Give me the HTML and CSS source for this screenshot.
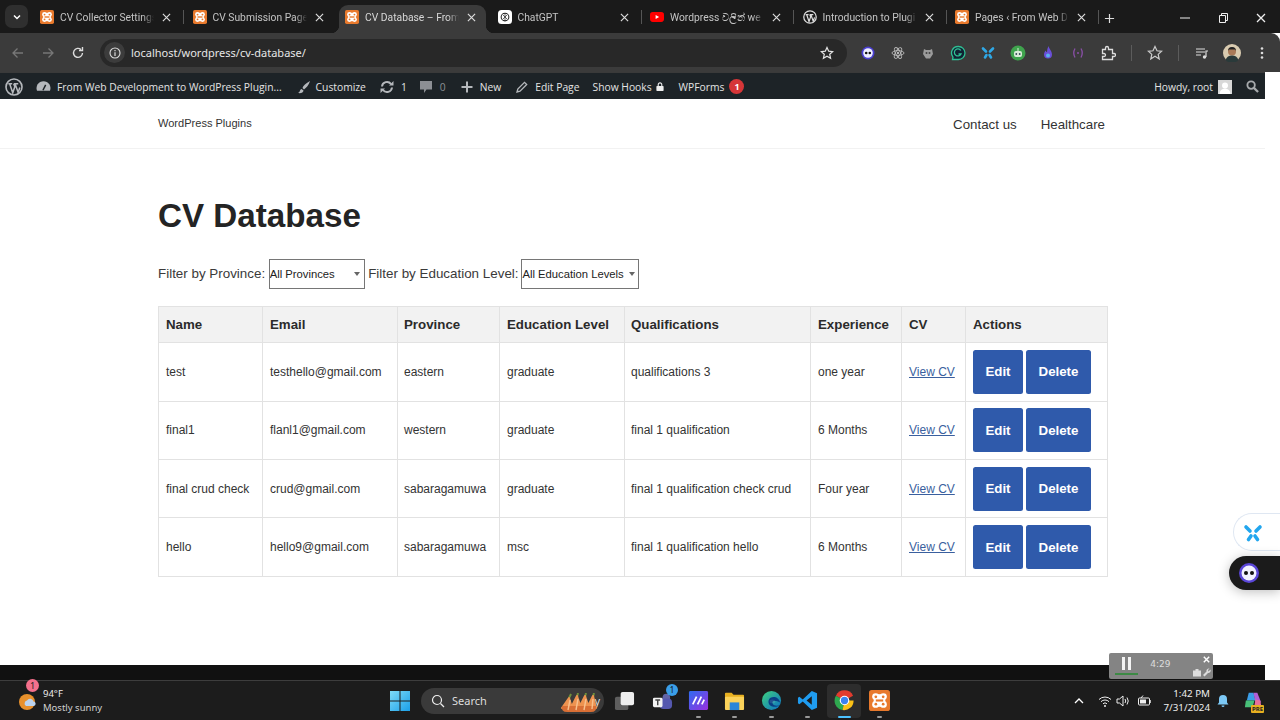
FILE: index.html
```html
<!DOCTYPE html>
<html lang="en">
<head>
<meta charset="utf-8">
<title>CV Database</title>
<link rel="stylesheet" href="styles.css">
</head>
<body>
<svg class="defs" aria-hidden="true">
  <symbol id="xampp" viewBox="0 0 20 20"><rect width="20" height="20" rx="2.500" fill="#e8792c"/><g fill="#fff"><circle cx="6.300" cy="6.300" r="3.300"/><circle cx="13.700" cy="6.300" r="3.300"/><circle cx="6.300" cy="13.700" r="3.300"/><circle cx="13.700" cy="13.700" r="3.300"/><rect x="6" y="4" width="8" height="12"/><rect x="4.500" y="7" width="11" height="6"/></g><g fill="#e8792c"><circle cx="6.500" cy="6.500" r="1.300"/><circle cx="13.500" cy="6.500" r="1.300"/><circle cx="6.500" cy="13.500" r="1.300"/><circle cx="13.500" cy="13.500" r="1.300"/><rect x="6.500" y="9" width="7" height="2"/></g></symbol>
  <symbol id="wp" viewBox="0 0 20 20"><circle cx="10" cy="10" r="8.900" fill="none" stroke="currentColor" stroke-width="1.800"/><path d="M3.700 6.500h4.300M9.700 6.500h5M5.200 6.500l3.400 10 2.300-6.700-1.200-3.300M11.200 6.500l3.400 9.500 1.900-5.500" fill="none" stroke="currentColor" stroke-width="1.700"/></symbol>
  <symbol id="x" viewBox="0 0 10 10"><path d="M1 1l8 8M9 1l-8 8" stroke="currentColor" stroke-width="1.300" fill="none"/></symbol>
</svg>

<header class="tabstrip">
  <button class="tabmenu"><svg class="i10" viewBox="0 0 10 10"><path d="M2 3.500l3 3 3-3" fill="none" stroke="#fff" stroke-width="1.500"/></svg></button>
  <div class="tab"><svg class="fav"><use href="#xampp"/></svg><span class="tabtitle">CV Collector Settings</span><svg class="close"><use href="#x"/></svg></div><i class="tabsep on"></i>
  <div class="tab"><svg class="fav"><use href="#xampp"/></svg><span class="tabtitle">CV Submission Page</span><svg class="close"><use href="#x"/></svg></div><i class="tabsep"></i>
  <div class="tab active"><svg class="fav"><use href="#xampp"/></svg><span class="tabtitle">CV Database – From</span><svg class="close"><use href="#x"/></svg></div><i class="tabsep"></i>
  <div class="tab"><svg class="fav" viewBox="0 0 20 20"><rect width="20" height="20" rx="5" fill="#fff"/><circle cx="10" cy="10" r="5.500" fill="none" stroke="#222" stroke-width="1.500"/><path d="M7 7l6 6M13 7l-6 6M10 4.500v11" stroke="#222" stroke-width="1"/></svg><span class="tabtitle">ChatGPT</span><svg class="close"><use href="#x"/></svg></div><i class="tabsep on"></i>
  <div class="tab"><svg class="fav" viewBox="0 0 20 20"><rect y="3" width="20" height="14" rx="4" fill="#f00"/><path d="M8 7l5 3-5 3z" fill="#fff"/></svg><span class="tabtitle">Wordpress වලින් we</span><svg class="close"><use href="#x"/></svg></div><i class="tabsep on"></i>
  <div class="tab"><svg class="fav wpfav"><use href="#wp"/></svg><span class="tabtitle">Introduction to Plugi</span><svg class="close"><use href="#x"/></svg></div><i class="tabsep on"></i>
  <div class="tab"><svg class="fav"><use href="#xampp"/></svg><span class="tabtitle">Pages ‹ From Web D</span><svg class="close"><use href="#x"/></svg></div><i class="tabsep on"></i>
  <svg class="newtab" viewBox="0 0 12 12"><path d="M6 1v10M1 6h10" stroke="#ddd" stroke-width="1.300"/></svg>
  <div class="winctl">
    <span class="winbtn"><svg class="i10" viewBox="0 0 10 10"><path d="M0 5h10" stroke="#eee" stroke-width="1"/></svg></span>
    <span class="winbtn"><svg class="i10" viewBox="0 0 10 10"><path d="M1.500 2.500h6v7h-6zM3.500 2.500V.5h6v7H7.500" fill="none" stroke="#eee"/></svg></span>
    <span class="winbtn"><svg class="i10 wx"><use href="#x"/></svg></span>
  </div>
</header>

<nav class="toolbar">
  <span class="slot"><svg class="i14" viewBox="0 0 14 14"><path d="M12 7H2M6.500 2.500L2 7l4.500 4.500" fill="none" stroke="#777" stroke-width="1.300"/></svg></span>
  <span class="slot"><svg class="i14" viewBox="0 0 14 14"><path d="M2 7h10M7.500 2.500L12 7l-4.500 4.500" fill="none" stroke="#777" stroke-width="1.300"/></svg></span>
  <span class="slot"><svg class="i14" viewBox="0 0 14 14"><path d="M11.500 7A4.500 4.500 0 1 1 10 3.500M11.500 1v3.500H8" fill="none" stroke="#ddd" stroke-width="1.400"/></svg></span>
  <div class="omnibox">
    <span class="siteinfo"><svg class="i12" viewBox="0 0 12 12"><circle cx="6" cy="6" r="5" fill="none" stroke="#ddd" stroke-width="1.100"/><path d="M6 5.200V9M6 3v1.200" stroke="#ddd" stroke-width="1.200"/></svg></span>
    <span class="url">localhost/wordpress/cv-database/</span>
    <svg class="omnistar" viewBox="0 0 14 14"><path d="M7 1.500l1.700 3.700 4 .4-3 2.700.9 4L7 10.300l-3.600 2 .9-4-3-2.700 4-.4z" fill="none" stroke="#e6e6e6" stroke-width="1.200"/></svg>
  </div>
  <div class="exts">
    <span class="slot"><svg class="i14" viewBox="0 0 14 14"><circle cx="7" cy="7" r="6.500" fill="#4a3fd0"/><circle cx="7" cy="7" r="4.800" fill="#eef"/><circle cx="5.200" cy="7" r="1.300" fill="#111"/><circle cx="8.800" cy="7" r="1.300" fill="#111"/></svg></span>
    <span class="slot"><svg class="i14" viewBox="0 0 14 14"><g fill="none" stroke="#bbb" stroke-width=".9"><ellipse cx="7" cy="7" rx="6" ry="2.400"/><ellipse cx="7" cy="7" rx="6" ry="2.400" transform="rotate(60 7 7)"/><ellipse cx="7" cy="7" rx="6" ry="2.400" transform="rotate(120 7 7)"/></g><circle cx="7" cy="7" r="1.200" fill="#bbb"/></svg></span>
    <span class="slot"><svg class="i14" viewBox="0 0 14 14"><path d="M3 3l2 1h4l2-1 1 5-3 4.500H5L2 8z" fill="#9b9b9b"/><circle cx="5.500" cy="7" r="1" fill="#444"/><circle cx="8.500" cy="7" r="1" fill="#444"/></svg></span>
    <span class="slot"><svg class="i16" viewBox="0 0 16 16"><path d="M8 1.500a6.500 6.500 0 0 0-5 10.600l-.5 2.400h6a6.500 6.500 0 0 0 0-13z" fill="#123" stroke="#2fbf93" stroke-width="1.300"/><path d="M10.800 5.500A3.500 3.500 0 1 0 11 9H8.500" fill="none" stroke="#2fbf93" stroke-width="1.300"/></svg></span>
    <span class="slot"><svg class="i14" viewBox="0 0 14 14"><g stroke="#2fa8e6" stroke-width="2.600" stroke-linecap="round"><path d="M2 2.500l3 3M12 2.500l-3 3M4 11.500l1.500-2.500M10 11.500L8.500 9"/></g></svg></span>
    <span class="slot"><svg class="i16" viewBox="0 0 16 16"><circle cx="8" cy="8" r="7.500" fill="#3fa34d"/><rect x="4" y="6" width="8" height="6" rx="2" fill="#d8ecd8"/><circle cx="6.300" cy="9" r=".9" fill="#345"/><circle cx="9.700" cy="9" r=".9" fill="#345"/><path d="M8 6V3" stroke="#d8ecd8"/></svg></span>
    <span class="slot"><svg class="i16" viewBox="0 0 16 16"><path d="M8.500 1c.5 3 3.500 5 3.500 8.500a4 4 0 0 1-8 0c0-2 1-3 1.500-4 .5 1 1 1.500 1.500 1.500C7 5 7.500 3 8.500 1z" fill="#6a4fd8"/><circle cx="8" cy="10.500" r="2" fill="#5ab0f0"/></svg></span>
    <span class="slot"><svg class="i14" viewBox="0 0 14 14"><path d="M4 2.500Q1.500 7 4 11.500M10 2.500q2.500 4.500 0 9" fill="none" stroke="#8a4fa8" stroke-width="1.300"/><circle cx="7" cy="7" r="1" fill="#8a4fa8"/></svg></span>
    <span class="slot"><svg class="i16" viewBox="0 0 16 16"><path d="M2.500 4.500h3V3a1.500 1.500 0 0 1 3 0v1.500h4v4H14a1.500 1.500 0 0 1 0 3h-1.500v3h-10v-3H4a1.500 1.500 0 0 0 0-3H2.500z" fill="none" stroke="#ddd" stroke-width="1.300"/></svg></span>
  </div>
  <i class="toolsep"></i>
  <span class="slot"><svg class="i16" viewBox="0 0 16 16"><path d="M8 1.500l2 4.300 4.600.5-3.400 3.100 1 4.600L8 11.300l-4.200 2.700 1-4.600L1.400 6.300 6 5.800z" fill="none" stroke="#ccc" stroke-width="1.200"/></svg></span>
  <i class="toolsep"></i>
  <span class="slot"><svg class="i14" viewBox="0 0 14 14"><path d="M1 3h9M1 6h9M1 9h5" stroke="#ddd" stroke-width="1.200"/><circle cx="9.500" cy="11" r="1.700" fill="#ddd"/><path d="M11 11V5h2" fill="none" stroke="#ddd" stroke-width="1.200"/></svg></span>
  <span class="slot"><svg class="i18" viewBox="0 0 18 18"><circle cx="9" cy="9" r="9" fill="#d9cbb0"/><circle cx="9" cy="7.500" r="4" fill="#a97a58"/><path d="M5 7a4 4 0 0 1 8 0l-1-1.500H6z" fill="#222"/><path d="M2.500 16a7 7 0 0 1 13 0 9 9 0 0 1-13 0z" fill="#2a3a3a"/></svg></span>
  <span class="slot"><svg class="i14" viewBox="0 0 14 14"><circle cx="7" cy="2.500" r="1.300" fill="#ddd"/><circle cx="7" cy="7" r="1.300" fill="#ddd"/><circle cx="7" cy="11.500" r="1.300" fill="#ddd"/></svg></span>
</nav>

<div class="adminbar">
  <svg class="ab-wp"><use href="#wp"/></svg>
  <div class="ab-item site"><svg class="i14 ab-gauge" viewBox="0 0 14 14"><path d="M1 11a6.500 6.500 0 1 1 12 0z" fill="#b5b8bc"/><path d="M6.500 10.500l2.500-5" stroke="#1d2327" stroke-width="1.400"/></svg><span>From Web Development to WordPress Plugin...</span></div>
  <div class="ab-item cust"><svg class="i14" viewBox="0 0 14 14"><path d="M13 1C9 3 6 6 5.500 8l1.500 1.500C9 8 12 5 13 1zM4.500 9C2.500 9.500 3.500 12 1 13c3 .5 5.500-.5 5.500-2.500z" fill="#b5b8bc"/></svg><span>Customize</span></div>
  <div class="ab-item upd"><svg class="i14" viewBox="0 0 14 14"><path d="M2 6.500A5 5 0 0 1 11 4M12 7.500A5 5 0 0 1 3 10" fill="none" stroke="#b5b8bc" stroke-width="2"/><path d="M9 5.500h4.500V1zM5 8.500H.5V13z" fill="#b5b8bc"/></svg><span>1</span></div>
  <div class="ab-item cmt"><svg class="i14" viewBox="0 0 14 14"><path d="M1 1h12v8.500H7.500L5 13V9.500H1z" fill="#8c8f94"/></svg><span class="dim">0</span></div>
  <div class="ab-item new"><svg class="i12" viewBox="0 0 12 12"><path d="M6 .5v11M.5 6h11" stroke="#b5b8bc" stroke-width="2"/></svg><span>New</span></div>
  <div class="ab-item edit"><svg class="i12" viewBox="0 0 12 12"><path d="M1 11l.8-3L8.500 1.300l2.200 2.200L4 10.200z" fill="none" stroke="#b5b8bc" stroke-width="1.300"/></svg><span>Edit Page</span></div>
  <div class="ab-item hooks"><span>Show Hooks</span><svg class="i8" viewBox="0 0 8 10"><path d="M2 4.500V3a2 2 0 0 1 4 0v1.500" fill="none" stroke="#eee" stroke-width="1.200"/><rect y="4.500" width="8" height="5.500" rx=".7" fill="#eee"/></svg></div>
  <div class="ab-item wpf"><span>WPForms</span><b class="ab-badge">1</b></div>
  <div class="ab-right">
    <span>Howdy, root</span>
    <i class="ab-avatar"><svg viewBox="0 0 14 14"><rect width="14" height="14" fill="#d8d8d8"/><circle cx="7" cy="5.500" r="3" fill="#fff"/><path d="M1.500 14a5.500 5.500 0 0 1 11 0z" fill="#fff"/></svg></i>
    <svg class="ab-search" viewBox="0 0 14 14"><circle cx="5.500" cy="5.500" r="4" fill="none" stroke="#a7aaad" stroke-width="2"/><path d="M8.500 8.500l4.500 4.500" stroke="#a7aaad" stroke-width="2.400"/></svg>
  </div>
</div>

<div class="viewport">
  <div class="site-head">
    <a class="brand">WordPress Plugins</a>
    <div class="site-nav"><a>Contact us</a><a>Healthcare</a></div>
  </div>
  <main class="content">
    <h1>CV Database</h1>
    <form class="filters">
      <label for="p">Filter by Province:</label>
      <span class="selwrap"><select id="p" class="sel-prov"><option>All Provinces</option></select></span>
      <label for="e">Filter by Education Level:</label>
      <span class="selwrap"><select id="e" class="sel-edu"><option>All Education Levels</option></select></span>
    </form>
    <table class="cvs">
      <colgroup><col class="c1"><col class="c2"><col class="c3"><col class="c4"><col class="c5"><col class="c6"><col class="c7"><col class="c8"></colgroup>
      <thead><tr><th>Name</th><th>Email</th><th>Province</th><th>Education Level</th><th>Qualifications</th><th>Experience</th><th>CV</th><th>Actions</th></tr></thead>
      <tbody>
        <tr><td>test</td><td>testhello@gmail.com</td><td>eastern</td><td>graduate</td><td>qualifications 3</td><td>one year</td><td><a href="#">View CV</a></td><td><div class="acts"><button class="btn edit-btn">Edit</button><button class="btn del-btn">Delete</button></div></td></tr>
        <tr><td>final1</td><td>flanl1@gmail.com</td><td>western</td><td>graduate</td><td>final 1 qualification</td><td>6 Months</td><td><a href="#">View CV</a></td><td><div class="acts"><button class="btn edit-btn">Edit</button><button class="btn del-btn">Delete</button></div></td></tr>
        <tr><td>final crud check</td><td>crud@gmail.com</td><td>sabaragamuwa</td><td>graduate</td><td>final 1 qualification check crud</td><td>Four year</td><td><a href="#">View CV</a></td><td><div class="acts"><button class="btn edit-btn">Edit</button><button class="btn del-btn">Delete</button></div></td></tr>
        <tr><td>hello</td><td>hello9@gmail.com</td><td>sabaragamuwa</td><td>msc</td><td>final 1 qualification hello</td><td>6 Months</td><td><a href="#">View CV</a></td><td><div class="acts"><button class="btn edit-btn">Edit</button><button class="btn del-btn">Delete</button></div></td></tr>
      </tbody>
    </table>
  </main>
  <footer class="site-foot"></footer>
</div>

<div class="taskbar">
  <div class="weather">
    <svg class="wx-icon" viewBox="0 0 20 22"><circle cx="9" cy="12" r="8" fill="#e8902c"/><path d="M8 16a3 3 0 0 1 1-5.500 3.500 3.500 0 0 1 6.500 1A2.300 2.300 0 0 1 16 16z" fill="#bcd3ee"/></svg>
    <b class="wx-badge">1</b>
    <div class="wx-text"><span>94°F</span><span class="wx-sub">Mostly sunny</span></div>
  </div>
  <div class="tb-center">
    <svg class="winlogo" viewBox="0 0 20 20"><defs><linearGradient id="wg" x1="0" y1="0" x2="1" y2="1"><stop offset="0" stop-color="#7fdcf8"/><stop offset="1" stop-color="#1a9fe8"/></linearGradient></defs><path d="M0 0h9.500v9.500H0zM10.500 0H20v9.500h-9.500zM0 10.500h9.500V20H0zM10.500 10.500H20V20h-9.500z" fill="url(#wg)"/></svg>
    <div class="tb-search">
      <svg class="i14" viewBox="0 0 14 14"><circle cx="6" cy="6" r="4.500" fill="none" stroke="#eee" stroke-width="1.200"/><path d="M9.500 9.500l3.500 3.500" stroke="#eee" stroke-width="1.200"/></svg>
      <span>Search</span>
      <svg class="carrots" viewBox="0 0 38 20"><path d="M9 5l2-4M17 4l1-4M25 4l1-4M33 4l1-4" stroke="#6f8f3a" stroke-width="2"/><g fill="#ee9350" stroke="#ee9350" stroke-width="2" stroke-linejoin="round"><path d="M2 15L9 5l3 10zM11 15l6-12 4 12zM19 15l6-12 4 12zM27 15l6-12 3 12z"/></g><path d="M2 13h34q1 6-5 6H7q-6 0-5-6z" fill="#d96f35"/><path d="M10 7l-2 10M18 6l-2 11M26 6l-2 11M33 6l-1 10" stroke="#f8c08e" stroke-width="1.400"/></svg>
      <span class="y-tail">y</span>
    </div>
    <svg class="tb-ic taskview" viewBox="0 0 22 22"><rect x="1" y="7" width="14" height="14" rx="2" fill="#5e5e5e"/><rect x="7" y="2" width="14" height="14" rx="2" fill="#eee"/></svg>
    <span class="tb-slot tb-teams">
      <svg class="tb-ic" viewBox="0 0 22 22"><circle cx="15" cy="8" r="4" fill="#6264a7"/><rect x="8" y="9" width="13" height="11" rx="4" fill="#5558af"/><rect x="1" y="8" width="10" height="10" rx="1.500" fill="#f3f3f3"/><path d="M3.500 10.500h5M6 10.500v5.500" stroke="#444" stroke-width="1.500"/></svg>
      <b class="tb-badge">1</b>
    </span>
    <span class="tb-slot"><svg class="tb-ic" viewBox="0 0 22 22"><defs><linearGradient id="mg" x1="0" y1="0" x2="1" y2="1"><stop offset="0" stop-color="#2f6cf0"/><stop offset="1" stop-color="#9a2fe0"/></linearGradient></defs><rect x="1" y="1" width="20" height="20" rx="1.500" fill="url(#mg)"/><path d="M5 15l4-8M10 15l4-8M14.500 15l2.500-5" stroke="#fff" stroke-width="1.800"/></svg><i class="dot"></i></span>
    <span class="tb-slot"><svg class="tb-ic" viewBox="0 0 22 22"><path d="M1 4a1 1 0 0 1 1-1h6l2 2h10a1 1 0 0 1 1 1v3H1z" fill="#e8b020"/><rect x="1" y="7" width="20" height="14" rx="1" fill="#fbd25a"/><rect x="6" y="13" width="10" height="8" fill="#2a86d8"/></svg><i class="dot"></i></span>
    <span class="tb-slot"><svg class="tb-ic" viewBox="0 0 22 22"><defs><linearGradient id="eg" x1="0" y1="0" x2="1" y2="1"><stop offset="0" stop-color="#3ed27f"/><stop offset="1" stop-color="#0c6fc4"/></linearGradient></defs><circle cx="11" cy="11" r="10" fill="url(#eg)"/><path d="M20 13c-1-5-6-7-10-5-3 2-3 7 1 9 3 1 6 1 8-1-3 1-7 0-7-3 0-2 4-2 8 0z" fill="#0a3f86"/><ellipse cx="12" cy="12" rx="3" ry="2" fill="#fff" opacity=".1"/></svg><i class="dot"></i></span>
    <span class="tb-slot"><svg class="tb-ic" viewBox="0 0 22 22"><path d="M15.500 1L21 3.500v15L15.500 21 6 12l-3.500 3L1 14V8l1.500-1L6 10zM15.500 6.500L10 11l5.500 4.500z" fill="#1f9cf0"/></svg><i class="dot"></i></span>
    <span class="tb-slot tb-active"><svg class="tb-ic" viewBox="0 0 22 22"><path d="M11 11L2 6a10 10 0 0 1 18 0z" fill="#e33b2e"/><path d="M11 11l-9-5a10 10 0 0 0 7 15z" fill="#2fa84f"/><path d="M11 11h9.500A10 10 0 0 1 9 21z" fill="#fbc116"/><circle cx="11" cy="11" r="5" fill="#fff"/><circle cx="11" cy="11" r="3.800" fill="#3b82f0"/></svg><i class="dot blue"></i></span>
    <span class="tb-slot"><svg class="tb-ic"><use href="#xampp"/></svg><i class="dot"></i></span>
  </div>
  <div class="tray">
    <svg class="i10" viewBox="0 0 10 10"><path d="M1 7l4-4 4 4" fill="none" stroke="#fff" stroke-width="1.300"/></svg>
    <svg class="i14 t-wifi" viewBox="0 0 14 14"><path d="M1 5.500a8.500 8.500 0 0 1 12 0M3 7.700a5.500 5.500 0 0 1 8 0M5 9.800a2.800 2.800 0 0 1 4 0" fill="none" stroke="#eee" stroke-width="1"/><circle cx="7" cy="12" r="1" fill="#eee"/></svg>
    <svg class="i14 t-vol" viewBox="0 0 14 14"><path d="M1 5h2.500L7 2v10L3.500 9H1z" fill="none" stroke="#eee"/><path d="M9 5q1.500 2 0 4M11 3.500q2.500 3.500 0 7" fill="none" stroke="#eee"/></svg>
    <svg class="i14 t-bat" viewBox="0 0 14 14"><rect x=".5" y="4" width="11" height="7" rx="1" fill="none" stroke="#eee"/><rect x="2" y="5.500" width="6" height="4" fill="#eee"/><path d="M12 6v3" stroke="#eee" stroke-width="1.500"/><path d="M3 4l2-2.500" stroke="#eee"/></svg>
    <div class="clock"><span>1:42 PM</span><span>7/31/2024</span></div>
    <svg class="i14 t-bell" viewBox="0 0 14 14"><path d="M7 1a4 4 0 0 1 4 4v3.500l1.500 2h-11l1.500-2V5a4 4 0 0 1 4-4z" fill="#7cc8f5"/><path d="M5.500 11.500a1.500 1.500 0 0 0 3 0z" fill="#7cc8f5"/></svg>
    <span class="t-copilot"><svg class="tb-ic" viewBox="0 0 22 20"><path d="M6 2h5l2 8H4z" fill="#3b9ee8"/><path d="M11 2h4l4 10h-6z" fill="#b05fd8"/><path d="M3 10h9l-2 7H2z" fill="#48c078"/><path d="M13 9l5 1 1 5h-7z" fill="#e8709a"/></svg><b class="pre">PRE</b></span>
  </div>
</div>

<div class="float-x"><svg class="i20" viewBox="0 0 20 20"><g stroke="#22a6ee" stroke-width="3.600" stroke-linecap="round"><path d="M3 4l4 4M17 4l-4 4M5.500 16.500l2.500-3.500M14.500 16.500L12 13"/></g></svg></div>
<div class="float-bot"><svg class="i20" viewBox="0 0 20 20"><circle cx="10" cy="10" r="10" fill="#5a46d8"/><circle cx="10" cy="10" r="7.500" fill="#f2f2ff"/><circle cx="7" cy="10" r="2" fill="#111"/><circle cx="13" cy="10" r="2" fill="#111"/></svg></div>
<div class="recorder">
  <div class="rec-pause"><i></i><i></i><u></u></div>
  <span class="rec-time">4:29</span>
  <div class="rec-tools"><svg class="rec-x" viewBox="0 0 10 10"><path d="M2 2l6 6M8 2l-6 6" stroke="#fff" stroke-width="1.600"/></svg><span class="rec-row"><svg class="i8" viewBox="0 0 8 8"><path d="M0 2h8v6H0zM2.500 2V.5h3V2" fill="#ddd"/></svg><svg class="i8" viewBox="0 0 8 8"><path d="M7.500 1L5.500 3 5 1.500 6.500 0a2.500 2.500 0 0 0-3 3L0 6.500 1.500 8 5 4.500a2.500 2.500 0 0 0 2.500-3.500z" fill="#ddd"/></svg></span></div>
</div>
</body>
</html>
```
FILE: styles.css
```css
* { box-sizing: border-box; }
html, body { margin: 0; height: 100%; }
body {
  width: 1280px; height: 720px; overflow: hidden; display: flex; flex-direction: column;
  background: #fff; font-family: "Liberation Sans", Arial, sans-serif; color: #2b2b2b; position: relative;
}
.defs { width: 0; height: 0; position: absolute; }
svg { display: block; flex: none; }
.i8 { width: 8px; height: 9px; }
.i10 { width: 10px; height: 10px; }
.i12 { width: 12px; height: 12px; }
.i14 { width: 14px; height: 14px; }
.i16 { width: 16px; height: 16px; }
.i18 { width: 18px; height: 18px; }
.i20 { width: 20px; height: 20px; }

/* browser tabs */
.tabstrip { height: 33px; flex: none; background: #1a1a1a; display: flex; align-items: flex-end; padding-left: 5px; font-family: Roboto, sans-serif; }
.tabmenu { width: 23px; height: 23px; margin: 0 6px 5px 0; padding: 0; border: 0; border-radius: 7px; background: #2f2f2f; display: flex; align-items: center; justify-content: center; }
.tab { width: 146.500px; height: 28px; padding: 0 9.500px 4px 6px; display: flex; align-items: center; position: relative; color: #c4c4c4; }
.tab.active { background: #3b3b3b; border-radius: 9px 9px 0 0; color: #d8d8d8; }
.tab.active::before, .tab.active::after { content: ""; position: absolute; bottom: 0; width: 8px; height: 8px; }
.tab.active::before { left: -8px; background: radial-gradient(circle at 0 0, transparent 8px, #3b3b3b 8.500px); }
.tab.active::after { right: -8px; background: radial-gradient(circle at 100% 0, transparent 8px, #3b3b3b 8.500px); }
.fav { width: 14px; height: 14px; }
.wpfav { color: #ddd; }
.tabtitle { flex: 1; min-width: 0; margin: 0 8px 0 6px; font-size: 10.300px; white-space: nowrap; -webkit-mask-image: linear-gradient(to right, #000 88%, transparent); mask-image: linear-gradient(to right, #000 88%, transparent); }
.close { width: 9px; height: 9px; color: #ddd; }
.tabsep { width: 6px; height: 28px; display: flex; align-items: center; justify-content: center; padding-bottom: 5px; }
.tabsep.on::after { content: ""; width: 1px; height: 14px; background: #555; }
.newtab { width: 11px; height: 11px; margin: 0 0 9px 2px; }
.winctl { margin-left: auto; display: flex; padding-bottom: 3px; }
.winbtn { width: 38px; height: 24px; display: flex; align-items: center; justify-content: center; }
.wx { color: #eee; }

/* toolbar */
.toolbar { height: 39px; flex: none; background: #3b3b3b; border-top-right-radius: 9px; display: flex; align-items: center; padding-left: 3px; font-family: "Noto Sans", sans-serif; }
.slot { width: 30px; height: 28px; flex: none; display: flex; align-items: center; justify-content: center; }
.omnibox { width: 747px; height: 28px; margin: 0 6px 0 7px; background: #282828; border-radius: 14px; display: flex; align-items: center; padding: 0 13px 0 4px; }
.siteinfo { width: 21px; height: 21px; border-radius: 50%; background: #3c3c3c; display: flex; align-items: center; justify-content: center; }
.url { margin-left: 6px; font-size: 11px; color: #e6e6e6; flex: 1; }
.omnistar { width: 14px; height: 14px; }
.exts { display: flex; }
.toolsep { width: 1px; height: 16px; background: #5c5c5c; margin: 0 8px; flex: none; }

/* wp admin bar */
.adminbar { height: 27px; flex: none; width: 1265px; background: #1d2327; border-top: 1px solid #3a3a3a; display: flex; align-items: center; padding: 1px 0 0 5px; color: #e4e4e4; font-family: "Open Sans", sans-serif; font-size: 10.300px; white-space: nowrap; }
.ab-wp { width: 18px; height: 18px; color: #b5b8bc; margin-right: 13px; }
.ab-item { display: flex; align-items: center; gap: 7px; }
.ab-item.site { gap: 6px; }
.ab-gauge { width: 15px; height: 15px; }
.ab-item.cust { margin-left: 15px; gap: 5px; }
.ab-item.upd { margin-left: 14px; }
.ab-item.cmt { margin-left: 12px; }
.ab-item.new { margin-left: 15px; }
.ab-item.edit { margin-left: 15px; }
.ab-item.hooks { margin-left: 13px; gap: 4px; }
.ab-item.wpf { margin-left: 15px; gap: 5px; }
.dim { color: #8c8f94; }
.ab-badge { width: 15px; height: 15px; border-radius: 50%; background: #d63638; color: #fff; font-size: 9px; font-weight: 700; display: flex; align-items: center; justify-content: center; }
.ab-right { margin-left: auto; display: flex; align-items: center; }
.ab-avatar { width: 14px; height: 14px; margin: 0 14px 0 5px; display: block; }
.ab-search { width: 13px; height: 13px; margin-right: 6px; }

/* page */
.viewport { flex: 1; min-height: 0; width: 1265px; display: flex; flex-direction: column; }
.site-head { height: 50px; flex: none; border-bottom: 1px solid #f2f2f2; display: flex; align-items: center; justify-content: space-between; padding: 0 160px 0 158px; }
.brand { font-size: 11.050px; color: #333; margin-bottom: 1px; }
.site-nav { display: flex; gap: 24px; font-size: 13.300px; color: #333; padding-top: 1px; }
.content { flex: 1; padding: 47px 0 0 158px; }
h1 { margin: 0; font-size: 33.200px; line-height: 40px; font-weight: 700; color: #242424; }
.filters { margin-top: 23px; height: 30px; display: flex; align-items: center; gap: 3.500px; font-size: 13.400px; color: #3a3a3a; }
.filters label { margin-bottom: 2px; }
.selwrap { position: relative; display: block; }
.selwrap::after { content: ""; position: absolute; right: 4.500px; top: 13px; border: 3px solid transparent; border-top: 4px solid #666; border-bottom: 0; }
select { display: block; height: 30px; padding: 0; border: 1px solid #767676; border-radius: 0; background-color: #fff; color: #222; font: 11.250px "Liberation Sans", Arial, sans-serif; appearance: none; -webkit-appearance: none; }
.sel-prov { width: 96px; }
.sel-edu { width: 118px; margin-left: -.6px; }
.cvs { margin-top: 17px; width: 949px; table-layout: fixed; border-collapse: collapse; font-size: 12px; color: #333; }
.c1 { width: 104px; } .c2 { width: 135px; } .c3 { width: 102px; } .c4 { width: 125px; }
.c5 { width: 186px; } .c6 { width: 91px; } .c7 { width: 64px; } .c8 { width: 142px; }
.cvs th, .cvs td { border: 1px solid #e2e2e2; padding: 0 0 0 7px; text-align: left; white-space: nowrap; }
.cvs th:nth-child(3), .cvs td:nth-child(3), .cvs th:nth-child(5), .cvs td:nth-child(5) { padding-left: 6px; }
.cvs th { height: 36.300px; background: #f2f2f2; font-size: 13.300px; font-weight: 700; color: #2b2b2b; }
.cvs td { height: 58.300px; }
.cvs tbody tr:last-child td { height: 59.300px; }
.cvs a { color: #3a5f9e; }
.acts { display: flex; align-items: center; gap: 3px; }
.btn { height: 44px; padding: 0; border: 0; border-radius: 2.500px; background: #2f5aab; color: #fff; font: 700 13.300px "Liberation Sans", Arial, sans-serif; }
.edit-btn { width: 50px; }
.del-btn { width: 65px; }
.site-foot { height: 15px; flex: none; background: #111; }

/* taskbar */
.taskbar { height: 40px; flex: none; background: #1c1c1c; border-top: 1px solid #3d3d3d; display: flex; align-items: center; position: relative; font-family: "Noto Sans", sans-serif; color: #eee; }
.weather { width: 390px; padding-left: 18px; display: flex; align-items: center; position: relative; flex: none; }
.wx-icon { width: 20px; height: 22px; }
.wx-badge { position: absolute; left: 26px; top: -8px; width: 13px; height: 13px; border-radius: 50%; background: #f4708c; color: #222; font-size: 9px; font-weight: 400; display: flex; align-items: center; justify-content: center; }
.wx-text { margin-left: 5px; display: flex; flex-direction: column; font-size: 9.500px; line-height: 14px; }
.wx-sub { color: #d0d0d0; }
.tb-center { display: flex; align-items: center; }
.winlogo { width: 20px; height: 20px; margin-right: 11px; }
.tb-search { width: 183px; height: 26px; border-radius: 13px; background: #3a3a3a; display: flex; align-items: center; padding-left: 10px; font-size: 11px; color: #ddd; position: relative; }
.tb-search span { margin-left: 7px; }
.tb-search .y-tail { position: absolute; right: 4px; top: 5px; margin: 0; font-size: 11px; }
.carrots { width: 38px; height: 20px; position: absolute; right: 6px; top: 5px; z-index: 1; }
.tb-ic { width: 21px; height: 21px; }
.taskview { margin: 0 6px 0 10px; }
.tb-slot { width: 36.300px; height: 34px; display: flex; align-items: center; justify-content: center; position: relative; flex: none; }
.tb-teams { margin-left: 3px; }
.tb-active { background: #2d2d2d; border-radius: 4px; width: 34px; margin: 0 0 0 2px; }
.dot { position: absolute; left: 50%; bottom: 0; width: 5px; height: 2px; margin-left: -2.500px; border-radius: 1px; background: #9a9a9a; }
.dot.blue { width: 13px; margin-left: -6.500px; background: #4cc2ff; }
.tb-badge { position: absolute; left: 22px; top: 0; width: 12px; height: 12px; border-radius: 50%; background: #3a9ee8; color: #111; font-size: 8px; font-weight: 400; display: flex; align-items: center; justify-content: center; }
.tray { margin-left: auto; display: flex; align-items: center; padding-right: 16px; }
.t-wifi { margin-left: 14px; }
.t-vol { margin-left: 4px; }
.t-bat { margin-left: 8px; }
.clock { margin-left: 11px; display: flex; flex-direction: column; align-items: flex-end; font-size: 9.800px; line-height: 14px; }
.t-bell { margin-left: 6px; }
.t-copilot { margin-left: 13px; position: relative; display: block; }
.pre { position: absolute; right: 0; bottom: -2px; padding: 0 1px; background: #e8b020; color: #222; font-size: 6px; line-height: 8px; font-weight: 700; border-radius: 1px; }

/* floating overlays */
.float-x { position: absolute; left: 1233px; top: 513px; width: 47px; height: 38px; padding: 9px 0 0 9px; background: #fff; border: 1px solid #dfe7f2; border-right: 0; border-radius: 19px 0 0 19px; }
.float-bot { position: absolute; left: 1229px; top: 556px; width: 51px; height: 34px; padding: 7px 0 0 10px; background: #1b1b1b; border-radius: 17px 0 0 17px; box-shadow: 0 2px 12px rgba(0,0,0,.25); }
.recorder { position: absolute; left: 1109px; top: 653px; width: 104px; height: 26px; background: #848484; border-radius: 2px; display: flex; color: #fff; }
.rec-pause { width: 30px; position: relative; display: flex; gap: 3px; justify-content: center; padding-top: 4px; margin-left: 3px; }
.rec-pause i { width: 3px; height: 13px; background: #f4f4f4; }
.rec-pause u { position: absolute; left: 3px; top: 20px; width: 23px; height: 2px; background: #3d8a45; }
.rec-time { margin: 6px 0 0 9px; font-size: 9px; font-family: "DejaVu Sans", sans-serif; color: #dcdcdc; width: 40px; }
.rec-tools { margin-left: auto; width: 24px; display: flex; flex-direction: column; align-items: flex-end; padding: 2px 2px 0 0; }
.rec-x { width: 9px; height: 9px; }
.rec-row { margin-top: 4px; display: flex; gap: 2px; }
```
